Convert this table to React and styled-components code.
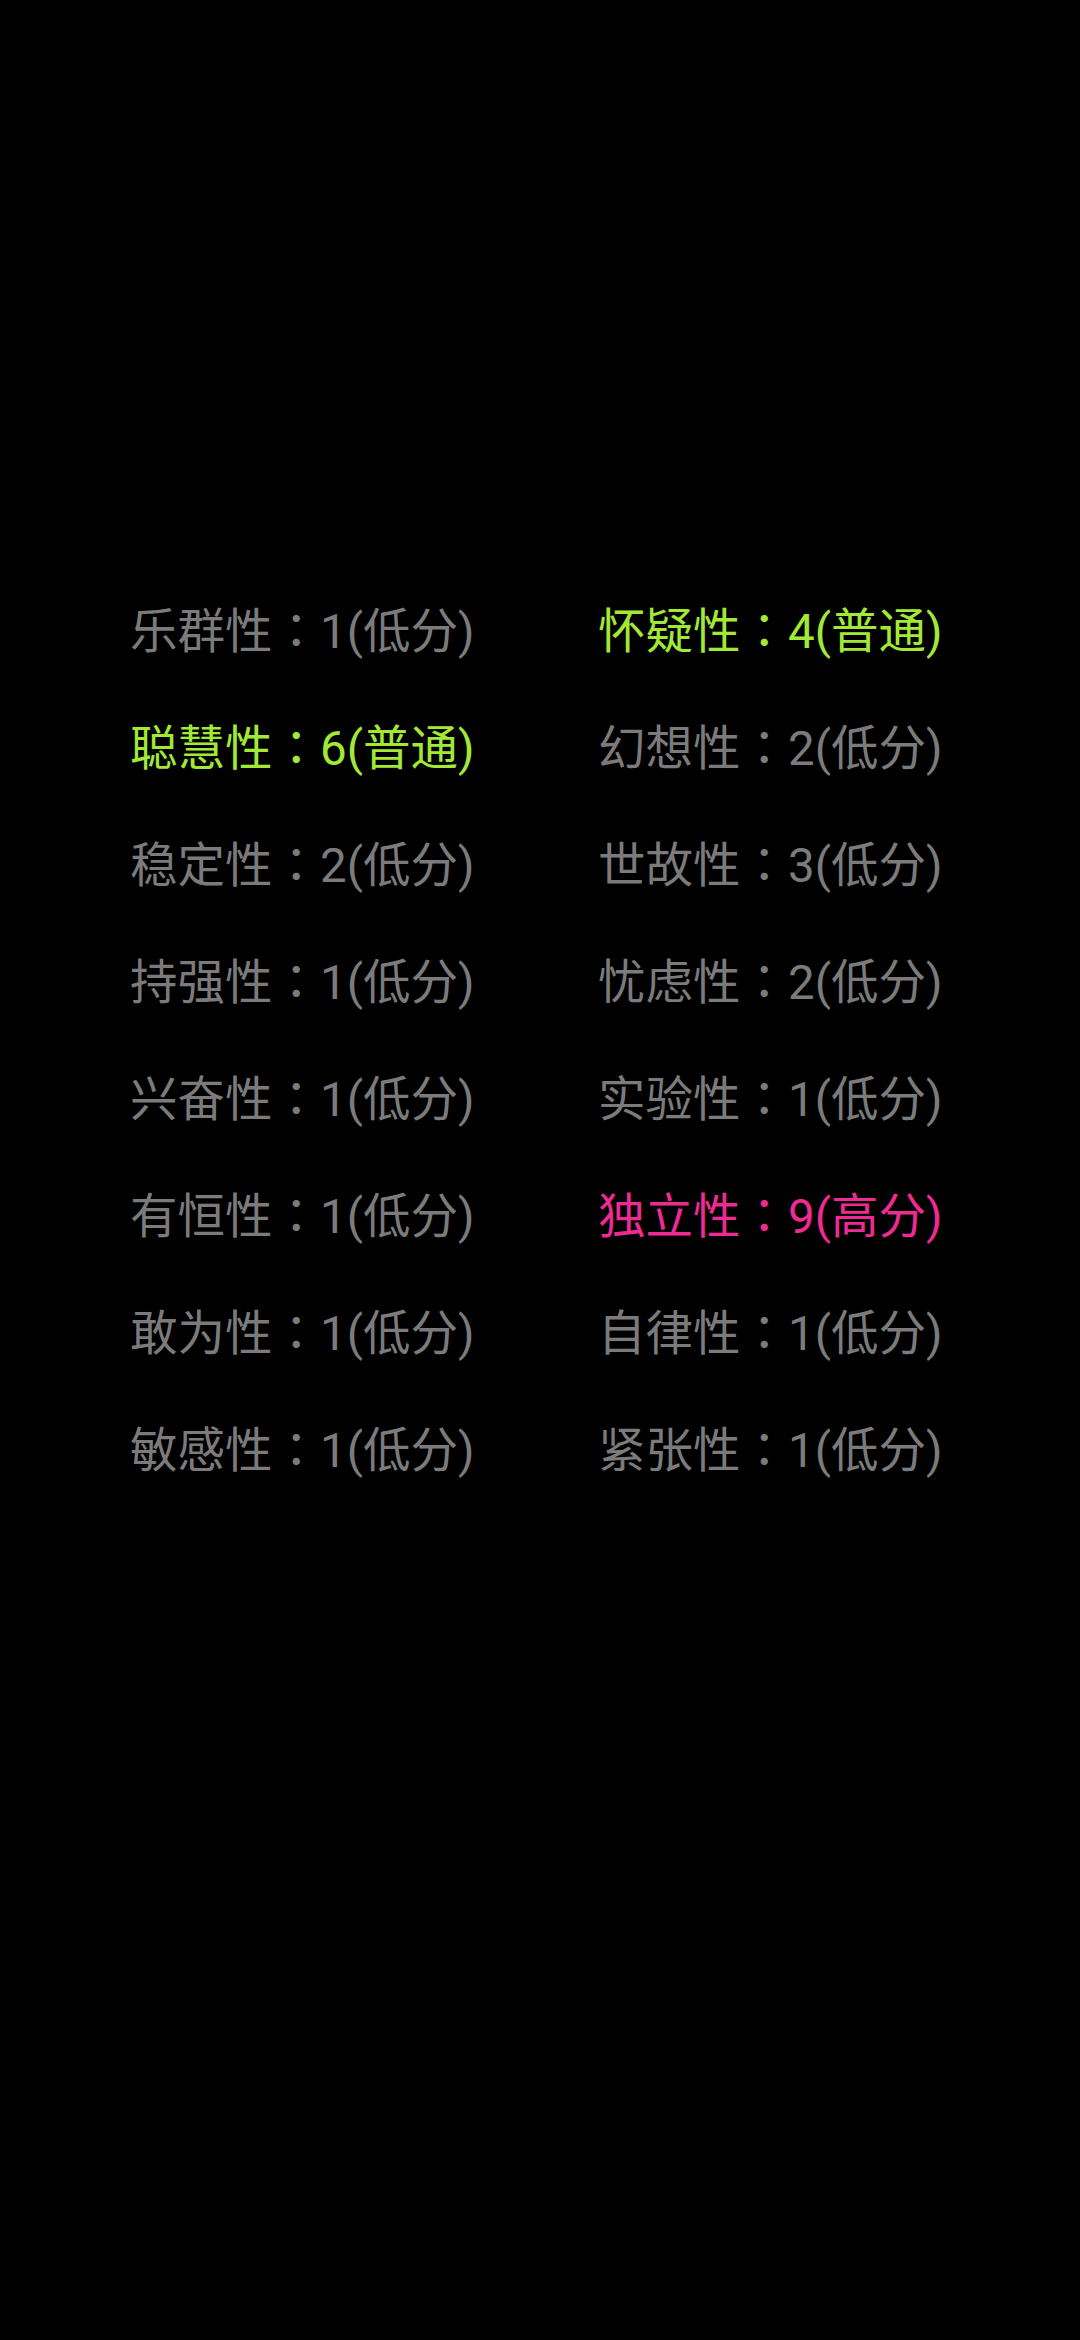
import React from "react";
import styled, { createGlobalStyle } from "styled-components";

const Global = createGlobalStyle`
  html, body { margin: 0; padding: 0; background: #000; }
  body { min-height: 2340px; }
`;

const Page = styled.div`
  width: 1080px;
  min-height: 2340px;
  background: #000;
  box-sizing: border-box;
  padding: 569px 0 0 130px;
`;

const Grid = styled.div`
  display: grid;
  grid-template-columns: 468px auto;
  grid-auto-rows: 117px;
`;

const Item = styled.div`
  display: flex;
  align-items: center;
  font-family: "Roboto", "Noto Sans CJK SC", sans-serif;
  font-size: 47.5px;
  white-space: nowrap;
  color: ${(p) =>
    p.$level === "mid" ? "#a2e935" : p.$level === "high" ? "#ee2a93" : "#7b7b7b"};
`;

const Colon = styled.span`
  font-family: "Noto Sans CJK TC", "Noto Sans CJK JP", sans-serif;
`;

const items = [
  ["乐群性", 1, "低分"],
  ["怀疑性", 4, "普通"],
  ["聪慧性", 6, "普通"],
  ["幻想性", 2, "低分"],
  ["稳定性", 2, "低分"],
  ["世故性", 3, "低分"],
  ["持强性", 1, "低分"],
  ["忧虑性", 2, "低分"],
  ["兴奋性", 1, "低分"],
  ["实验性", 1, "低分"],
  ["有恒性", 1, "低分"],
  ["独立性", 9, "高分"],
  ["敢为性", 1, "低分"],
  ["自律性", 1, "低分"],
  ["敏感性", 1, "低分"],
  ["紧张性", 1, "低分"],
];

const levelOf = (t) => (t === "普通" ? "mid" : t === "高分" ? "high" : "low");

export default function App() {
  return (
    <Page>
      <Global />
      <Grid>
        {items.map(([name, score, tag]) => (
          <Item key={name} $level={levelOf(tag)}>
            {name}
            <Colon>：</Colon>
            {score}({tag})
          </Item>
        ))}
      </Grid>
    </Page>
  );
}
